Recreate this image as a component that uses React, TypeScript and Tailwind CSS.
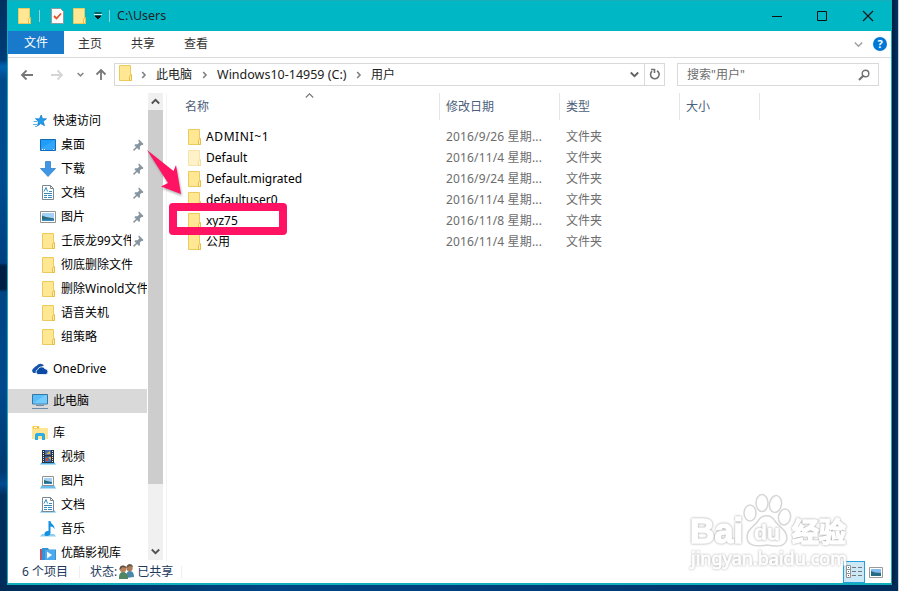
import type { ReactNode } from 'react';

type IconProps = { className?: string };

const Folder = ({ className = '' }: IconProps) => (
  <svg width="13" height="16" viewBox="0 0 13 16" className={`shrink-0 ${className}`}>
    <path d="M.5.5h11v9h1v6H.5z" fill="#ffe793" stroke="#ecca5c" />
    <path d="M10.500 15.500v-4l1-1.500h1v5.500z" fill="#fff0b0" stroke="#e6bd45" />
  </svg>
);

const Star = () => (
  <svg width="16" height="16" viewBox="0 0 16 16" className="shrink-0">
    <path d="M9.200 2l1.300 3.700 4 .1-3.300 2.500 1.300 4.400-3.800-2.100L5.500 13l1-4.500L3.800 6l3.700-.3z" fill="#1e9cee" stroke="#1476bd" strokeWidth=".7" />
    <path d="M3 5.500h3M1.500 8.500h4M1 11.500h4M3 13.500h2" stroke="#55b4ec" />
  </svg>
);

const Desktop = () => (
  <svg width="16" height="16" viewBox="0 0 16 16" className="shrink-0">
    <path d="M.5 2.500h15v11H.5z" fill="#1f9dfa" stroke="#1469b5" />
    <path d="M1 11L15 3v10H1z" fill="#45b0fc" opacity=".5" />
    <path d="M2 12.500h1m1 0h1m8 0h1" stroke="#fff" />
  </svg>
);

const Download = () => (
  <svg width="16" height="16" viewBox="0 0 16 16" className="shrink-0">
    <path d="M5.500.5h5v7h5L8 15.500.5 7.500h5z" fill="#3f96e6" stroke="#3380c8" strokeWidth=".8" />
  </svg>
);

const Doc = ({ stand = false }: { stand?: boolean }) => (
  <svg width="16" height="16" viewBox="0 0 16 16" className="shrink-0">
    {stand && <path d="M2 13h12l2 2.500H0z" fill="#53b7ee" />}
    <path d="M2.500.5h8l3 3v11h-11z" fill="#fff" stroke="#7d8790" />
    <path d="M10.500.5v3h3" fill="none" stroke="#7d8790" />
    <path d="M4 6.500l2-4 1.500 4M4 8.500h8M9 6.500h3M4 10.500h3M4 12.500h3M8 10.500h4M8 12.500h4" fill="none" stroke="#348ac4" />
  </svg>
);

const Picture = ({ stand = false }: { stand?: boolean }) => (
  <svg width="16" height="16" viewBox="0 0 16 16" className="shrink-0">
    {stand && <path d="M2 12h12l2 3.500H0z" fill="#68bdeb" />}
    <path d={stand ? 'M2.500 3.500h11v9h-11z' : 'M.5 2.500h15v11H.5z'} fill="#fff" stroke="#929292" />
    <path d={stand ? 'M4 5h8v6H4z' : 'M2 4h12v8H2z'} fill="#a3d1f5" />
    <path d={stand ? 'M4 7l3 1 5 1v2H4z' : 'M2 6.500l4 1.500 8 1.500V12H2z'} fill="#286c7b" />
    <path d={stand ? 'M4 10h8v1H4z' : 'M2 10.500h12V12H2z'} fill="#3c8ac4" />
  </svg>
);

const Pin = () => (
  <svg width="11" height="12" viewBox="0 0 11 12" className="shrink-0">
    <path d="M6 .5L10.500 5l-.9 1.100-1.200-.2-1.600 1.900.2 2.100-1 1L1.300 6.300l1-1.100 2.200.1 1.800-1.700L5.200 1.500z" fill="#8795a1" />
    <path d="M4.200 7.800L.6 11.400" stroke="#8795a1" strokeWidth="1.500" />
  </svg>
);

const OneDrive = () => (
  <svg width="16" height="16" viewBox="0 0 16 16" className="shrink-0">
    <path d="M1.500 12A2.800 2.800 0 0 1 2 7a3.500 3.500 0 0 1 2.500-2A4.500 4.500 0 0 1 12 4.500L7 7l-3 5z" fill="#1553ab" />
    <path d="M6 13.500a2.600 2.600 0 0 1-.2-5 4 4 0 0 1 7.200-.7 2.900 2.900 0 0 1 .8 5.700z" fill="#0b4ba6" stroke="#fff" strokeWidth=".8" />
  </svg>
);

const Computer = () => (
  <svg width="16" height="16" viewBox="0 0 16 16" className="shrink-0">
    <path d="M.5 1.500h15v9.500H.5z" fill="#58bdfa" stroke="#3876a0" />
    <path d="M1 10.500L13 2h2v8.500z" fill="#8bd4ff" opacity=".6" />
    <path d="M4 12.500h8M0 15.500h16" stroke="#6b8ba7" />
  </svg>
);

const Library = () => (
  <svg width="16" height="16" viewBox="0 0 16 16" className="shrink-0">
    <path d="M0 1h7l1 2h8v11H0z" fill="#ffe593" />
    <path d="M1 2.500h6" stroke="#f0b91d" strokeWidth="2" />
    <path d="M2 2.500h3" stroke="#fff" />
    <path d="M3 15V9.500L4.500 8h7L13 9.500V15h-3v-4H6v4z" fill="#2cade6" />
  </svg>
);

const Video = () => (
  <svg width="16" height="16" viewBox="0 0 16 16" className="shrink-0">
    <path d="M2 13h12l2 2.500H0z" fill="#53b7ee" />
    <path d="M2 1h12v13H2z" fill="#2d333b" />
    <path d="M5 1h6v5H5zM5 7.500h6v5.500H5z" fill="#466fb4" />
    <path d="M6 5l4-3v3zM8 8h3v3z" fill="#e7b13f" />
    <path d="M6 9h2v3H6z" fill="#c44a38" />
    <path d="M3.500 2v11M12.500 2v11" stroke="#e4e8ed" strokeDasharray="1 1" />
  </svg>
);

const Music = () => (
  <svg width="16" height="16" viewBox="0 0 16 16" className="shrink-0">
    <path d="M2 13h12l2 2.500H0z" fill="#8dcdf0" />
    <path d="M8.500 0h2c0 3 4.500 3.500 4 8.500-.5-2-2-3-4-3v6.500c0 3.500-5.500 4-6 1.500s2-4 4-3.500z" fill="#1690e0" />
  </svg>
);

const Youku = () => (
  <svg width="16" height="16" viewBox="0 0 16 16" className="shrink-0">
    <path d="M0 4h5v11H0z" fill="#bd536b" />
    <path d="M2 3h6l1 1.500h7V16H2z" fill="#3593d8" />
    <path d="M5 5h10v10H5z" fill="#4ba9ed" />
    <path d="M7 6.500l5 3.500-5 3.500z" fill="#fff" />
  </svg>
);

const People = () => (
  <svg width="17" height="16" viewBox="0 0 17 16" className="shrink-0">
    <path d="M8 14c0-5 1-7 4-7s4 3 4 6z" fill="#4b87aa" />
    <circle cx="11.500" cy="4" r="3.200" fill="#ad7c59" />
    <path d="M8.500 4c0-5 6-5 6.500-1l-3-1z" fill="#6b5a48" />
    <path d="M1 15c0-5 1-7 4-7s5 2 5 7z" fill="#4f8563" />
    <circle cx="5" cy="5" r="3.200" fill="#b9835e" />
    <path d="M1.500 6C1 .5 8 .5 8.500 4l-4-1z" fill="#5e4d3e" />
  </svg>
);

const Chevron = ({ className = '', w = 9, stroke = 1.5 }: IconProps & { w?: number; stroke?: number }) => (
  <svg width={w} height={w} viewBox="0 0 9 9" className={`shrink-0 ${className}`}>
    <path d="M.8 2.500l3.700 3.700 3.700-3.700" fill="none" stroke="currentColor" strokeWidth={stroke} />
  </svg>
);

const Crumb = () => (
  <svg width="6" height="8" viewBox="0 0 6 8" className="shrink-0 text-[#808080]">
    <path d="M1.200 1l2.800 3-2.800 3" fill="none" stroke="currentColor" strokeWidth="1.600" />
  </svg>
);

type NavItem = { label: string; icon: ReactNode; root?: boolean; gap?: boolean; pin?: boolean; active?: boolean };

const navItems: NavItem[] = [
  { label: '快速访问', icon: <Star />, root: true },
  { label: '桌面', icon: <Desktop />, pin: true },
  { label: '下载', icon: <Download />, pin: true },
  { label: '文档', icon: <Doc />, pin: true },
  { label: '图片', icon: <Picture />, pin: true },
  { label: '壬辰龙99文件', icon: <Folder className="ml-[2px] mr-px" />, pin: true },
  { label: '彻底删除文件', icon: <Folder className="ml-[2px] mr-px" /> },
  { label: '删除Winold文件', icon: <Folder className="ml-[2px] mr-px" /> },
  { label: '语音关机', icon: <Folder className="ml-[2px] mr-px" /> },
  { label: '组策略', icon: <Folder className="ml-[2px] mr-px" /> },
  { label: 'OneDrive', icon: <OneDrive />, root: true, gap: true },
  { label: '此电脑', icon: <Computer />, root: true, gap: true, active: true },
  { label: '库', icon: <Library />, root: true, gap: true },
  { label: '视频', icon: <Video /> },
  { label: '图片', icon: <Picture stand /> },
  { label: '文档', icon: <Doc stand /> },
  { label: '音乐', icon: <Music /> },
  { label: '优酷影视库', icon: <Youku /> },
];

const files = [
  { name: 'ADMINI~1', date: '2016/9/26 星期...', wide: true },
  { name: 'Default', date: '2016/11/4 星期...', hidden: true },
  { name: 'Default.migrated', date: '2016/9/24 星期...' },
  { name: 'defaultuser0', date: '2016/11/4 星期...' },
  { name: 'xyz75', date: '2016/11/8 星期...' },
  { name: '公用', date: '2016/11/4 星期...' },
];

function TitleBar() {
  return (
    <div className="flex h-[31px] shrink-0 items-center border-t border-[#18acb8] bg-[#00b7c6] pl-[10px]">
      <Folder className="-mt-px" />
      <div className="ml-[8px] h-3 w-px bg-[#8fd3d9]" />
      <svg width="13" height="16" viewBox="0 0 13 16" className="ml-[11px]">
        <path d="M.5.500h9l3 3v12H.5z" fill="#fafafa" stroke="#8b9c9e" />
        <path d="M3 8l2.500 2.500L10 5.500" fill="none" stroke="#df5629" strokeWidth="1.800" />
      </svg>
      <Folder className="ml-[9px]" />
      <svg width="8" height="8" viewBox="0 0 8 8" className="ml-[8px]">
        <path d="M.5 1h7M1 4h6L4 7z" fill="#111" stroke="#111" strokeWidth="1" />
        <path d="M0 2.500h8" stroke="#d8f4f6" />
      </svg>
      <div className="ml-[7px] h-3 w-px bg-[#8fd3d9]" />
      <span className="ml-[7px] text-[12.500px]">C:\Users</span>
      <svg width="106" height="12" viewBox="0 0 106 12" className="-mt-px ml-auto mr-[15px]" fill="none" stroke="#111">
        <path d="M2 6.500h10M47.500 1.500h9v9h-9z" />
        <path d="M93 1l10 10M103 1L93 11" strokeWidth="1.100" />
      </svg>
    </div>
  );
}

function Ribbon() {
  return (
    <div className="flex h-[27px] shrink-0 border-b border-[#dadbdc] text-[#333]">
      <div className="flex h-[23px] w-14 items-center justify-center bg-[#1979ca] text-white">文件</div>
      <div className="flex h-[26px] items-center gap-[29px] pl-[14px]">
        <span>主页</span>
        <span>共享</span>
        <span>查看</span>
      </div>
      <div className="ml-auto flex h-[26px] items-center pr-1">
        <Chevron className="mr-[10px] text-[#a0a0a0]" />
        <div className="flex h-[14px] w-[14px] items-center justify-center rounded-full bg-[#0078d7] text-[11px] font-bold text-white">?</div>
      </div>
    </div>
  );
}

function AddressBar() {
  return (
    <div className="flex h-[35px] shrink-0 items-center pb-[2px]">
      <svg width="14" height="12" viewBox="0 0 14 12" className="ml-[12px] text-[#777]">
        <path d="M13 6H2M6.500 1.500L2 6l4.500 4.500" fill="none" stroke="currentColor" strokeWidth="1.800" />
      </svg>
      <svg width="14" height="12" viewBox="0 0 14 12" className="ml-[16px] text-[#d5d5d5]">
        <path d="M1 6h11M7.500 1.500L12 6l-4.500 4.500" fill="none" stroke="currentColor" strokeWidth="1.800" />
      </svg>
      <Chevron w={7} className="ml-[13px] text-[#888]" stroke={2} />
      <svg width="12" height="13" viewBox="0 0 12 13" className="ml-[11px] text-[#777]">
        <path d="M6 12V2M1.500 6.500L6 2l4.500 4.500" fill="none" stroke="currentColor" strokeWidth="1.800" />
      </svg>
      <div className="ml-[7px] flex h-[23px] w-[551px] items-center border border-[#d9d9d9] pl-[4px]">
        <Folder className="-mt-[3px]" />
        <span className="ml-[9px]"><Crumb /></span>
        <span className="ml-[9px]">此电脑</span>
        <span className="ml-[10px]"><Crumb /></span>
        <span className="ml-[9px] w-[130px] whitespace-nowrap text-[12.500px]">Windows10-14959 (C:)</span>
        <span className="ml-[9px]"><Crumb /></span>
        <span className="ml-[9px]">用户</span>
        <Chevron className="ml-auto mr-[5px] text-[#606060]" stroke={1.8} />
        <div className="flex h-full w-[20px] items-center justify-center border-l border-[#d9d9d9]">
          <svg width="12" height="13" viewBox="0 0 12 13">
            <path d="M3 3.200A4.300 4.300 0 1 0 8 2.700M2 1.500h3.500V5" fill="none" stroke="#707070" strokeWidth="1.600" />
          </svg>
        </div>
      </div>
      <div className="ml-[12px] flex h-[23px] w-[202px] items-center border border-[#d9d9d9] pl-[9px] text-[#6d6d6d]">
        <span>搜索"用户"</span>
        <svg width="12" height="12" viewBox="0 0 12 12" className="ml-auto mr-[8px]">
          <path d="M5.500 6.500L1 11" stroke="#707070" strokeWidth="2" />
          <circle cx="7.500" cy="4.500" r="3.300" fill="none" stroke="#707070" strokeWidth="1.400" />
        </svg>
      </div>
    </div>
  );
}

function Sidebar() {
  return (
    <div className="h-[467px] w-[139px] shrink-0 overflow-hidden pt-[16px]">
      {navItems.map((item, i) => (
        <div
          key={i}
          className={`flex h-6 items-center ${item.root ? 'pl-6' : 'pl-8'} ${item.gap ? 'mt-2' : ''} ${item.active ? 'bg-[#d9d9d9]' : ''}`}
        >
          {item.icon}
          <span className="ml-[5px] min-w-0 flex-1 overflow-hidden whitespace-nowrap text-clip leading-[18px] text-black">
            {item.label}
          </span>
          {item.pin && <span className="mr-[3px] w-[13px] pl-[2px]"><Pin /></span>}
        </div>
      ))}
    </div>
  );
}

function Scrollbar() {
  return (
    <div className="ml-px flex h-[467px] w-[15px] shrink-0 flex-col bg-[#f0f0f0] text-[#505050]">
      <div className="flex h-[17px] items-center justify-center">
        <Chevron className="rotate-180" stroke={1.8} />
      </div>
      <div className="h-[374px] bg-[#cdcdcd]" />
      <div className="mt-auto flex h-[17px] items-center justify-center">
        <Chevron stroke={1.8} />
      </div>
    </div>
  );
}

function FileList() {
  return (
    <div className="relative ml-[3px] flex-1 border-l border-[#f3f3f3]">
      <div className="flex h-[27px] items-center text-[#4c607a]">
        <div className="flex h-full w-[273px] items-center border-r border-[#e5e5e5] pl-[18px]">
          名称
          <Chevron className="mb-auto ml-[96px] -mt-[2px] rotate-180 text-[#777]" stroke={1.1} />
        </div>
        <div className="flex h-full w-[120px] items-center border-r border-[#e5e5e5] pl-[6px]">修改日期</div>
        <div className="flex h-full w-[120px] items-center border-r border-[#e5e5e5] pl-[6px]">类型</div>
        <div className="flex h-full w-[80px] items-center border-r border-[#e5e5e5] pl-[6px]">大小</div>
      </div>
      <div className="pt-[6px]">
        {files.map((file) => (
          <div key={file.name} className="flex h-[21px] items-center pl-[21px]">
            <Folder className={file.hidden ? 'opacity-50' : ''} />
            <span className={`ml-[5px] w-[240px] text-black ${file.wide ? 'tracking-[0.6px]' : ''}`}>{file.name}</span>
            <span className="w-[120px] whitespace-nowrap tracking-[0.15px] text-[#6d6d6d]">{file.date}</span>
            <span className="text-[#6d6d6d]">文件夹</span>
          </div>
        ))}
      </div>

      {/* Marker around the user folder */}
      <div className="absolute left-[2px] top-[110px] h-[32px] w-[118px] rounded-[4px] border-8 border-[#ff1362]" />
      <svg width="40" height="48" viewBox="0 0 40 48" className="absolute -left-[20px] top-[57px] drop-shadow-[1px_2px_1px_rgba(0,0,0,0.3)]">
        <path d="M0 0L26.500 21 29 15 34 44 14 36.500 21 33z" fill="#ff1362" />
      </svg>
    </div>
  );
}

function Watermark() {
  return (
    <svg
      width="162"
      height="82"
      viewBox="0 0 162 82"
      className="absolute left-[687px] top-[492px]"
      fill="#fff"
      stroke="#fff"
      strokeWidth="1.500"
    >
      <g className="drop-shadow-[0_0_1px_#999]">
        <text x="3" y="51" fontSize="35" fontWeight="bold" fontFamily="Liberation Sans" textLength="53" lengthAdjust="spacingAndGlyphs">Bai</text>
        <text x="105" y="50" fontSize="27" fontWeight="bold" fontFamily="Noto Sans CJK SC" textLength="54">经验</text>
      </g>
      <g stroke="#d6d6d6">
        <ellipse cx="63" cy="21" rx="6" ry="8" />
        <ellipse cx="75" cy="11" rx="6" ry="8.500" />
        <ellipse cx="88.500" cy="12" rx="6" ry="8.500" transform="rotate(10 88.500 12)" />
        <ellipse cx="97.500" cy="25" rx="6" ry="8" transform="rotate(10 97.500 25)" />
        <path d="M71 29c4-7 13-7 17 0 4 6 12 9 12 17-1 9-9 9-20 7-11 2-20 1-20-8 0-8 7-10 11-16z" />
      </g>
      <g className="drop-shadow-[0_0_1px_#999]">
        <text x="67" y="48" fontSize="22" fontWeight="bold" fontFamily="Liberation Sans" textLength="26" lengthAdjust="spacingAndGlyphs" strokeWidth=".5">du</text>
      </g>
      <g className="drop-shadow-[0_0_1px_#aaa]">
        <text x="4" y="73" fontSize="18" fontFamily="Noto Sans" textLength="156" strokeWidth=".8">jingyan.baidu.com</text>
      </g>
    </svg>
  );
}

function StatusBar() {
  return (
    <div className="flex h-[22px] items-center text-[#1e395b]">
      <span className="ml-[14px] w-[57px]">6 个项目</span>
      <div className="h-3 w-px bg-[#eee]" />
      <span className="ml-[10px]">状态:</span>
      <span className="ml-px"><People /></span>
      <span className="ml-[2px]">已共享</span>
      <div className="ml-[8px] h-3 w-px bg-[#eee]" />
      <div className="ml-auto mr-[3px] flex h-[22px] w-[22px] items-center justify-center border border-[#26a0da] bg-[#cbe8f6]">
        <svg width="16" height="14" viewBox="0 0 16 14">
          <path d="M.5.500h4v12h-4zM.5 4.500h4M.5 8.500h4" fill="#fff" stroke="#929292" />
          <path d="M6 2.500h4m2 0h4M6 6.500h4m2 0h4M6 10.500h4m2 0h4" stroke="#777" />
          <path d="M2 2.500h1M2 6.500h1" stroke="#3d75ae" />
          <path d="M2 10.500h1" stroke="#b33" />
        </svg>
      </div>
      <svg width="14" height="11" viewBox="0 0 14 11" className="ml-px mr-[8px]">
        <path d="M.5.500h13v10H.5z" fill="#fff" stroke="#999" />
        <path d="M2 2h10v7H2z" fill="#82bcf0" />
        <path d="M2 4l4 1.500L12 6v3H2z" fill="#286b83" />
      </svg>
    </div>
  );
}

export default function App() {
  return (
    <div className="relative flex h-[591px] w-[899px] flex-col overflow-hidden bg-[#002f5f] font-['Noto_Sans','Noto_Sans_CJK_SC',sans-serif] text-[12px] leading-[18px] text-[#222]">
      <div className="flex h-[585px] shrink-0">
        <div className="w-[7px] bg-[linear-gradient(180deg,#00305f_0px,#003c78_60px,#0062b0_66px,#004a8c_80px,#004c90_180px,#004080_263px,#001f44_266px,#001f44_289px,#004484_292px,#00498c_390px,#003a70_470px,#004a90_484px,#003060_495px,#002d5a_585px)]" />
        <div className="flex w-[885px] flex-col border-x border-b-2 border-[#12aebc] bg-white">
          <TitleBar />
          <Ribbon />
          <AddressBar />
          <div className="flex h-[468px] shrink-0">
            <Sidebar />
            <Scrollbar />
            <FileList />
          </div>
          <StatusBar />
        </div>
        <div className="flex-1 border-r border-[#c8d0da] bg-[linear-gradient(90deg,#001c3c,#003468)]" />
      </div>
      <div className="flex-1 border-r border-[#c8d0da] bg-[linear-gradient(90deg,#002b57,#004585_30%,#003a75_70%,#002c5c)]" />
      <Watermark />
    </div>
  );
}
